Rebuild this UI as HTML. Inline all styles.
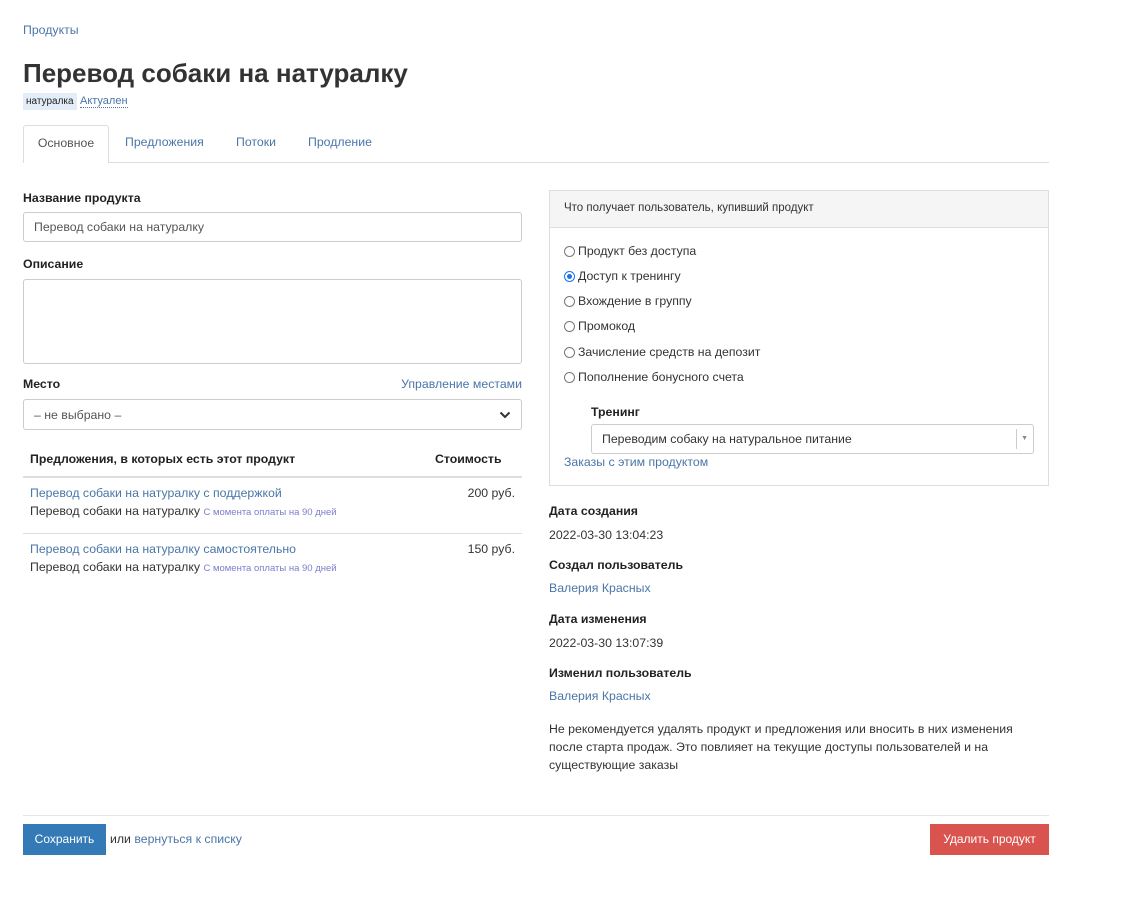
<!DOCTYPE html>
<html><head><meta charset="utf-8"><style>
*{box-sizing:border-box;margin:0;padding:0}
body{width:1128px;height:915px;background:#fff;font-family:"Liberation Sans",sans-serif;font-size:12.3px;color:#333;position:relative}
a{color:#4a76a8;text-decoration:none}
.abs{position:absolute}
.lbl{font-weight:bold;color:#222;font-size:12.3px}
.inp{position:absolute;border:1px solid #ccc;border-radius:3px;background:#fff;padding:0 10px;display:flex;align-items:center;color:#555}
.radio{position:absolute;left:564px;display:flex;align-items:center;color:#333}
.radio i{width:11px;height:11px;border:1px solid #777;border-radius:50%;margin-right:3px;display:inline-block;position:relative}
.radio i.on{border-color:#1a73e8}
.radio i.on:after{content:"";position:absolute;left:2px;top:2px;width:5px;height:5px;border-radius:50%;background:#1a73e8}
</style></head><body>
<a class="abs" style="left:23px;top:23px">Продукты</a>
<div class="abs" style="left:23px;top:58px;font-size:26px;font-weight:bold;color:#333">Перевод собаки на натуралку</div>
<div class="abs" style="left:23px;top:93px;background:#e2edf8;font-size:10px;padding:3px 3px;color:#222">натуралка</div>
<a class="abs" style="left:80px;top:95px;font-size:11px;border-bottom:1px dotted #4a76a8">Актуален</a>
<div class="abs" style="left:23px;top:162px;width:1026px;border-top:1px solid #ddd"></div>
<div class="abs" style="left:23px;top:125px;width:86px;height:38px;border:1px solid #ddd;border-bottom:none;background:#fff;border-radius:3px 3px 0 0;text-align:center;line-height:34px;color:#555">Основное</div>
<a class="abs" style="left:125px;top:135px">Предложения</a>
<a class="abs" style="left:236px;top:135px">Потоки</a>
<a class="abs" style="left:308px;top:135px">Продление</a>

<div class="abs lbl" style="left:23px;top:191px">Название продукта</div>
<div class="inp" style="left:23px;top:212px;width:499px;height:30px">Перевод собаки на натуралку</div>
<div class="abs lbl" style="left:23px;top:257px">Описание</div>
<div class="inp" style="left:23px;top:279px;width:499px;height:85px"></div>
<div class="abs lbl" style="left:23px;top:377px">Место</div>
<a class="abs" style="right:606px;top:377px">Управление местами</a>
<div class="inp" style="left:23px;top:399px;width:499px;height:31px;justify-content:space-between">– не выбрано –<svg width="12" height="8" viewBox="0 0 12 8"><path d="M1.5 1.5L6 6 10.5 1.5" stroke="#333" stroke-width="2" fill="none"/></svg></div>
<div class="abs lbl" style="left:30px;top:452px">Предложения, в которых есть этот продукт</div>
<div class="abs lbl" style="left:435px;top:452px">Стоимость</div>
<div class="abs" style="left:23px;top:476px;width:499px;border-top:2px solid #ddd"></div>
<a class="abs" style="left:30px;top:486px">Перевод собаки на натуралку с поддержкой</a>
<div class="abs" style="right:613px;top:486px">200 руб.</div>
<div class="abs" style="left:30px;top:504px">Перевод собаки на натуралку <span style="font-size:9.5px;color:#7d7dcc">С момента оплаты на 90 дней</span></div>
<div class="abs" style="left:23px;top:533px;width:499px;border-top:1px solid #ddd"></div>
<a class="abs" style="left:30px;top:542px">Перевод собаки на натуралку самостоятельно</a>
<div class="abs" style="right:613px;top:542px">150 руб.</div>
<div class="abs" style="left:30px;top:560px">Перевод собаки на натуралку <span style="font-size:9.5px;color:#7d7dcc">С момента оплаты на 90 дней</span></div>

<div class="abs" style="left:549px;top:190px;width:500px;height:296px;border:1px solid #ddd">
<div style="height:37px;background:#f5f5f5;border-bottom:1px solid #ddd;padding:11px 14px 0;font-size:11.5px;color:#333">Что получает пользователь, купивший продукт</div>
</div>
<div class="radio" style="top:244px"><i></i>Продукт без доступа</div>
<div class="radio" style="top:269px"><i class="on"></i>Доступ к тренингу</div>
<div class="radio" style="top:294px"><i></i>Вхождение в группу</div>
<div class="radio" style="top:319px"><i></i>Промокод</div>
<div class="radio" style="top:345px"><i></i>Зачисление средств на депозит</div>
<div class="radio" style="top:370px"><i></i>Пополнение бонусного счета</div>
<div class="abs lbl" style="left:591px;top:405px">Тренинг</div>
<div class="inp" style="left:591px;top:424px;width:443px;height:30px;color:#333">Переводим собаку на натуральное питание
<div style="position:absolute;right:16px;top:4px;bottom:4px;border-left:1px solid #ccc"></div><div style="position:absolute;right:5px;top:10px;font-size:7px;color:#888">▼</div></div>
<a class="abs" style="left:564px;top:455px">Заказы с этим продуктом</a>

<div class="abs lbl" style="left:549px;top:504px">Дата создания</div>
<div class="abs" style="left:549px;top:528px">2022-03-30 13:04:23</div>
<div class="abs lbl" style="left:549px;top:558px">Создал пользователь</div>
<a class="abs" style="left:549px;top:581px">Валерия Красных</a>
<div class="abs lbl" style="left:549px;top:612px">Дата изменения</div>
<div class="abs" style="left:549px;top:636px">2022-03-30 13:07:39</div>
<div class="abs lbl" style="left:549px;top:666px">Изменил пользователь</div>
<a class="abs" style="left:549px;top:689px">Валерия Красных</a>
<div class="abs" style="left:549px;top:720px;width:475px;line-height:18px">Не рекомендуется удалять продукт и предложения или вносить в них изменения после старта продаж. Это повлияет на текущие доступы пользователей и на существующие заказы</div>

<div class="abs" style="left:23px;top:815px;width:1026px;border-top:1px solid #e5e5e5"></div>
<div class="abs" style="left:23px;top:824px;width:83px;height:31px;background:#337ab7;color:#fff;text-align:center;line-height:31px;font-size:12px">Сохранить</div>
<div class="abs" style="left:110px;top:832px">или <a>вернуться к списку</a></div>
<div class="abs" style="left:930px;top:824px;width:119px;height:31px;background:#d9534f;color:#fff;text-align:center;line-height:31px;font-size:12px">Удалить продукт</div>
</body></html>
